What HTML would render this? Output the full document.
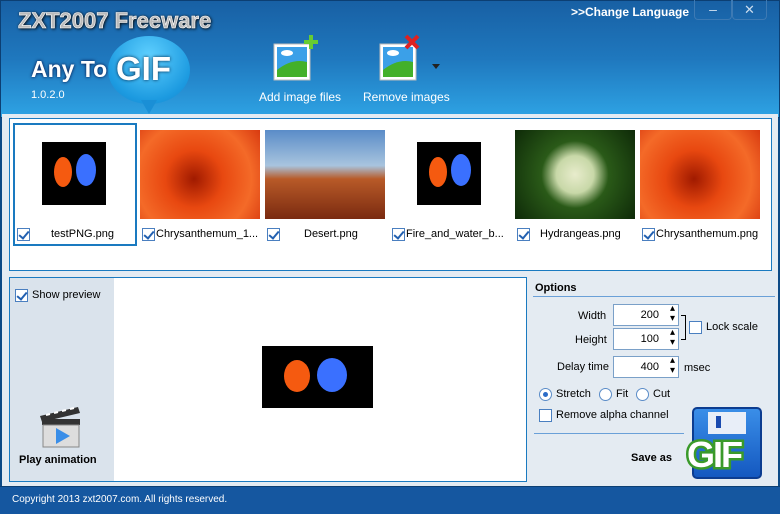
<!DOCTYPE html><html><head><style>
*{margin:0;padding:0;box-sizing:border-box}
body{width:780px;height:514px;overflow:hidden;font-family:"Liberation Sans",sans-serif;font-size:11px;color:#000;background:#0d4a86;position:relative}
.abs{position:absolute}
.hdr{left:0;top:0;width:780px;height:118px;background:linear-gradient(#1860a4 0%,#1f78be 50%,#2ea3e4 100%);border:1px solid #0c3f73}
.main{left:2px;top:114px;width:776px;height:372px;background:#e4ebf2}
.box{border:1px solid #1a7ac0;background:#fff}
.cb{width:13px;height:13px;border:1px solid #4a7fc0;background:#fff;position:absolute}
.cb.on::after{content:"";position:absolute;left:3px;top:0px;width:4px;height:8px;border:solid #2260b0;border-width:0 2px 2px 0;transform:rotate(40deg)}
.lbl{position:absolute;font-size:11px;white-space:nowrap}
.inp{position:absolute;width:66px;height:22px;border:1px solid #7aa0c8;background:#fff;text-align:right;padding:4px 19px 0 0;font-size:11px}
.inp::after{content:"▴\A▾";white-space:pre;position:absolute;right:3px;top:-1px;font-size:10px;line-height:10px}
.rad{position:absolute;width:13px;height:13px;border:1px solid #5a8cc8;border-radius:50%;background:#fff}
</style></head><body>
<div class="abs hdr"></div>
<div class="abs" style="left:18px;top:8px;font:bold 22px 'Liberation Sans';color:#bbb;-webkit-text-stroke:0.6px #fff;text-shadow:0 0 2px #222,1px 1px 3px #000">ZXT2007 Freeware</div>
<div class="abs" style="left:108px;top:36px;width:82px;height:68px;border-radius:50%;background:radial-gradient(circle at 50% 30%,#5fd0ff,#1c9ae0 70%,#1580c8)"></div>
<div class="abs" style="left:141px;top:100px;width:0;height:0;border-left:8px solid transparent;border-right:8px solid transparent;border-top:14px solid #1a8fd6"></div>
<div class="abs" style="left:31px;top:56px;font:bold 23px 'Liberation Sans';color:#fff;text-shadow:0 0 3px #003">Any To</div>
<div class="abs" style="left:116px;top:50px;font:bold 33px 'Liberation Sans';color:#fff;text-shadow:0 0 3px #024">GIF</div>
<div class="abs" style="left:31px;top:89px;color:#fff;font-size:11px">1.0.2.0</div>
<svg class="abs" style="left:272px;top:34px" width="48" height="48"><rect x="2" y="10" width="36" height="36" fill="#fff" stroke="#bbb"/><rect x="5" y="13" width="30" height="30" fill="#3ba0e8"/><path d="M5 36 Q20 24 35 28 V43 H5Z" fill="#43b02a"/><ellipse cx="15" cy="19" rx="6" ry="3" fill="#fff"/><path d="M32 8h14M39 1v14" stroke="#6c3" stroke-width="4"/></svg>
<svg class="abs" style="left:378px;top:34px" width="48" height="48"><rect x="2" y="10" width="36" height="36" fill="#fff" stroke="#bbb"/><rect x="5" y="13" width="30" height="30" fill="#3ba0e8"/><path d="M5 36 Q20 24 35 28 V43 H5Z" fill="#43b02a"/><ellipse cx="15" cy="19" rx="6" ry="3" fill="#fff"/><path d="M28 2l12 12M40 2L28 14" stroke="#d22" stroke-width="4"/></svg>
<div class="abs" style="left:432px;top:64px;border-left:4px solid transparent;border-right:4px solid transparent;border-top:5px solid #222"></div>
<div class="abs" style="left:259px;top:90px;color:#fff;font-size:12px">Add image files</div>
<div class="abs" style="left:363px;top:90px;color:#fff;font-size:12px">Remove images</div>
<div class="abs" style="left:571px;top:5px;color:#fff;font-weight:bold;font-size:12px">&gt;&gt;Change Language</div>
<div class="abs" style="left:694px;top:0;width:38px;height:20px;border:1px solid #3d7ab4;border-top:0;border-radius:0 0 4px 4px;color:#cde;text-align:center;font-size:14px;line-height:18px">–</div>
<div class="abs" style="left:732px;top:0;width:35px;height:20px;border:1px solid #3d7ab4;border-top:0;border-radius:0 0 4px 4px;color:#cde;text-align:center;font-size:13px;line-height:19px">✕</div>

<div class="abs main"></div>
<div class="abs box" style="left:9px;top:118px;width:763px;height:153px"></div>
<div class="abs" style="left:13px;top:123px;width:124px;height:123px;border:2px solid #1a7ac0"></div>
<div class="abs" style="left:42px;top:142px;width:64px;height:63px;background:#000"><div style="position:absolute;left:12px;top:15px;width:18px;height:30px;background:#f55a10;border-radius:50%"></div><div style="position:absolute;left:34px;top:12px;width:20px;height:32px;background:#3a70ff;border-radius:50%"></div></div>
<div class="abs" style="left:140px;top:130px;width:120px;height:89px;background:radial-gradient(circle at 45% 55%,#a01a00,#e84810 35%,#f46a28 70%,#d83a10)"></div>
<div class="abs" style="left:265px;top:130px;width:120px;height:89px;background:linear-gradient(#5a8cc8 0%,#a8c4de 40%,#b85a28 55%,#7a2a10 100%)"></div>
<div class="abs" style="left:417px;top:142px;width:64px;height:63px;background:#000"><div style="position:absolute;left:12px;top:15px;width:18px;height:30px;background:#f55a10;border-radius:50%"></div><div style="position:absolute;left:34px;top:12px;width:20px;height:32px;background:#3a70ff;border-radius:50%"></div></div>
<div class="abs" style="left:515px;top:130px;width:120px;height:89px;background:radial-gradient(circle at 50% 50%,#e8eccc 0,#c8d8a8 25%,#2a5a18 45%,#0e2a08 100%)"></div>
<div class="abs" style="left:640px;top:130px;width:120px;height:89px;background:radial-gradient(circle at 45% 55%,#a01a00,#e84810 35%,#f46a28 70%,#d83a10)"></div>
<div class="cb on" style="left:17px;top:228px"></div><div class="lbl" style="left:51px;top:228px">testPNG.png</div>
<div class="cb on" style="left:142px;top:228px"></div><div class="lbl" style="left:156px;top:228px">Chrysanthemum_1...</div>
<div class="cb on" style="left:267px;top:228px"></div><div class="lbl" style="left:304px;top:228px">Desert.png</div>
<div class="cb on" style="left:392px;top:228px"></div><div class="lbl" style="left:406px;top:228px">Fire_and_water_b...</div>
<div class="cb on" style="left:517px;top:228px"></div><div class="lbl" style="left:540px;top:228px">Hydrangeas.png</div>
<div class="cb on" style="left:642px;top:228px"></div><div class="lbl" style="left:656px;top:228px">Chrysanthemum.png</div>

<div class="abs box" style="left:9px;top:277px;width:518px;height:205px"></div>
<div class="abs" style="left:10px;top:278px;width:104px;height:203px;background:#dae3ec"></div>
<div class="cb on" style="left:15px;top:289px"></div><div class="lbl" style="left:32px;top:289px">Show preview</div>
<svg class="abs" style="left:38px;top:404px" width="46" height="46"><path d="M2 12 L40 3 L42 9 L4 18Z" fill="#333"/><path d="M8 11l4-1M16 9l4-1M24 7l4-1M32 5l4-1" stroke="#fff" stroke-width="2"/><rect x="4" y="15" width="38" height="6" fill="#333"/><rect x="5" y="21" width="36" height="22" fill="#ddd" stroke="#888"/><path d="M18 24 L32 32 L18 40Z" fill="#3a8ee8"/></svg>
<div class="abs" style="left:19px;top:454px;font-weight:bold;font-size:11px">Play animation</div>
<div class="abs" style="left:262px;top:346px;width:111px;height:62px;background:#000"><div style="position:absolute;left:22px;top:14px;width:26px;height:32px;background:#f55a10;border-radius:50%"></div><div style="position:absolute;left:55px;top:12px;width:30px;height:34px;background:#3a70ff;border-radius:50%"></div></div>

<div class="abs" style="left:535px;top:282px;font-weight:bold;font-size:11px">Options</div>
<div class="abs" style="left:533px;top:296px;width:242px;height:1px;background:#6aa0d8"></div>
<div class="lbl" style="left:578px;top:310px">Width</div><div class="inp" style="left:613px;top:304px">200</div>
<div class="lbl" style="left:575px;top:334px">Height</div><div class="inp" style="left:613px;top:328px">100</div>
<div class="abs" style="left:681px;top:315px;width:5px;height:25px;border:1.5px solid #000;border-left:0"></div>
<div class="cb" style="left:689px;top:321px"></div><div class="lbl" style="left:706px;top:321px">Lock scale</div>
<div class="lbl" style="left:557px;top:361px">Delay time</div><div class="inp" style="left:613px;top:356px">400</div><div class="lbl" style="left:684px;top:362px">msec</div>
<div class="rad" style="left:539px;top:388px"><div style="width:5px;height:5px;background:#2a6cc8;border-radius:50%;margin:3px"></div></div><div class="lbl" style="left:556px;top:388px">Stretch</div>
<div class="rad" style="left:599px;top:388px"></div><div class="lbl" style="left:616px;top:388px">Fit</div>
<div class="rad" style="left:636px;top:388px"></div><div class="lbl" style="left:653px;top:388px">Cut</div>
<div class="cb" style="left:539px;top:409px"></div><div class="lbl" style="left:556px;top:409px">Remove alpha channel</div>
<div class="abs" style="left:534px;top:433px;width:150px;height:1px;background:#6aa0d8"></div>
<div class="abs" style="left:631px;top:452px;font-weight:bold;font-size:11px">Save as</div>
<div class="abs" style="left:692px;top:407px;width:70px;height:72px;background:linear-gradient(#3a8ee8,#1458c0);border:2px solid #0c3c90;border-radius:5px"><div style="position:absolute;left:14px;top:3px;width:38px;height:22px;background:#e8eef8"></div><div style="position:absolute;left:22px;top:7px;width:5px;height:12px;background:#1a4ab0"></div></div>
<div class="abs" style="left:687px;top:434px;font:bold 36px 'Liberation Sans';color:#fff;-webkit-text-stroke:5px #3a9a2a;paint-order:stroke fill;letter-spacing:-2px">GIF</div>

<div class="abs" style="left:0;top:486px;width:780px;height:28px;background:#1557a0;border-top:1px solid #0c3f73"></div>
<div class="abs" style="left:12px;top:494px;color:#fff;font-size:10px">Copyright 2013 zxt2007.com. All rights reserved.</div>
</body></html>
